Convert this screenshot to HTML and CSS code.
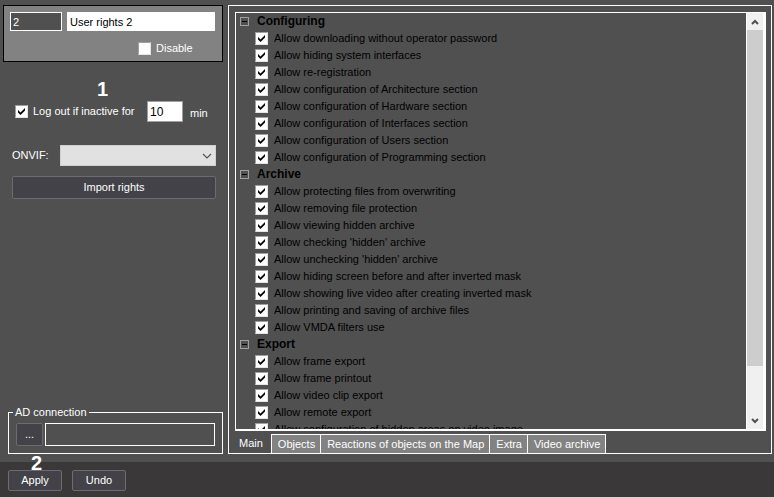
FILE: index.html
```html
<!DOCTYPE html>
<html lang="en">
<head>
    <meta charset="UTF-8">
    <meta name="viewport" content="width=device-width, initial-scale=1.0">
    <title>User rights</title>
    <link rel="stylesheet" href="styles.css">
</head>
<body>
<div class="content">
    <!-- Left column -->
    <div class="sidebar">
        <div class="object-box">
            <div class="object-row">
                <input type="text" class="object-id" value="2" aria-label="ID" readonly>
                <input type="text" class="object-name" value="User rights 2" aria-label="Name">
            </div>
            <label class="disable"><input type="checkbox" class="check">Disable</label>
        </div>

        <div class="logout-row">
            <span class="step step-logout">1</span>
            <input type="checkbox" class="check" id="logout" checked>
            <label for="logout" class="logout-label">Log out if inactive for</label>
            <input type="text" class="minutes" id="minutes" value="10">
            <label for="minutes" class="minutes-label">min</label>
        </div>

        <div class="onvif-row">
            <label for="onvif">ONVIF:</label>
            <div class="select-wrap">
                <select id="onvif"><option></option></select>
                <svg class="select-arrow" width="10" height="6" viewBox="0 0 10 6"><path d="M1 1l4 4 4-4" fill="none" stroke="#555" stroke-width="1.2"/></svg>
            </div>
        </div>
        <button class="btn btn-import">Import rights</button>

        <fieldset class="ad">
            <legend>AD connection</legend>
            <button class="btn btn-browse">...</button>
            <input type="text" class="ad-input" aria-label="AD connection">
        </fieldset>
    </div>

    <!-- Rights -->
    <div class="panel">
        <div class="list">
            <div class="tree">
                <h3><button class="expander" aria-label="Collapse Configuring"></button>Configuring</h3>
                <label><input type="checkbox" class="check" checked>Allow downloading without operator password</label>
                <label><input type="checkbox" class="check" checked>Allow hiding system interfaces</label>
                <label><input type="checkbox" class="check" checked>Allow re-registration</label>
                <label><input type="checkbox" class="check" checked>Allow configuration of Architecture section</label>
                <label><input type="checkbox" class="check" checked>Allow configuration of Hardware section</label>
                <label><input type="checkbox" class="check" checked>Allow configuration of Interfaces section</label>
                <label><input type="checkbox" class="check" checked>Allow configuration of Users section</label>
                <label><input type="checkbox" class="check" checked>Allow configuration of Programming section</label>
                <h3><button class="expander" aria-label="Collapse Archive"></button>Archive</h3>
                <label><input type="checkbox" class="check" checked>Allow protecting files from overwriting</label>
                <label><input type="checkbox" class="check" checked>Allow removing file protection</label>
                <label><input type="checkbox" class="check" checked>Allow viewing hidden archive</label>
                <label><input type="checkbox" class="check" checked>Allow checking 'hidden' archive</label>
                <label><input type="checkbox" class="check" checked>Allow unchecking 'hidden' archive</label>
                <label><input type="checkbox" class="check" checked>Allow hiding screen before and after inverted mask</label>
                <label><input type="checkbox" class="check" checked>Allow showing live video after creating inverted mask</label>
                <label><input type="checkbox" class="check" checked>Allow printing and saving of archive files</label>
                <label><input type="checkbox" class="check" checked>Allow VMDA filters use</label>
                <h3><button class="expander" aria-label="Collapse Export"></button>Export</h3>
                <label><input type="checkbox" class="check" checked>Allow frame export</label>
                <label><input type="checkbox" class="check" checked>Allow frame printout</label>
                <label><input type="checkbox" class="check" checked>Allow video clip export</label>
                <label><input type="checkbox" class="check" checked>Allow remote export</label>
                <label><input type="checkbox" class="check" checked>Allow configuration of hidden areas on video image</label>
            </div>
            <div class="scrollbar">
                <button class="scroll-btn" aria-label="Scroll up"><svg width="8" height="6" viewBox="0 0 8 6"><path d="M1 5l3-3 3 3" fill="none" stroke="#505050" stroke-width="2"/></svg></button>
                <div class="track"><div class="thumb"></div></div>
                <button class="scroll-btn" aria-label="Scroll down"><svg width="8" height="6" viewBox="0 0 8 6"><path d="M1 1l3 3 3-3" fill="none" stroke="#505050" stroke-width="2"/></svg></button>
            </div>
        </div>
        <div class="tabs">
            <button class="tab active">Main</button>
            <button class="tab">Objects</button>
            <button class="tab">Reactions of objects on the Map</button>
            <button class="tab">Extra</button>
            <button class="tab">Video archive</button>
        </div>
    </div>
</div>

<!-- Bottom buttons -->
<div class="footer">
    <span class="step step-apply">2</span>
    <button class="btn">Apply</button>
    <button class="btn">Undo</button>
</div>
</body>
</html>
```
FILE: styles.css
```css
* {
    box-sizing: border-box;
}
body {
    margin: 0;
    height: 100vh;
    display: flex;
    flex-direction: column;
    background-color: #505050;
    color: white;
    font-family: "Liberation Sans", Arial, sans-serif;
    font-size: 11px;
    line-height: 17px;
}
input, select, button {
    margin: 0;
    font: inherit;
    color: inherit;
    border-radius: 0;
}
.content {
    flex: 1;
    min-height: 0;
    display: flex;
    gap: 5px;
    padding: 5px 2px 8px 3px;
}

/* Left column */
.sidebar {
    width: 220px;
    display: flex;
    flex-direction: column;
}
.object-box {
    height: 57px;
    padding: 6px 7px 6px 6px;
    border: 1px solid black;
    background-color: #828282;
}
.object-row {
    display: flex;
    gap: 5px;
}
.object-row input {
    height: 19px;
    padding: 0 2px;
    border: 1px solid white;
}
.object-id {
    width: 52px;
    background-color: #505050;
}
.object-name {
    flex: 1;
    min-width: 0;
    background-color: white;
    color: black;
}
.disable {
    display: flex;
    align-items: center;
    gap: 5px;
    margin: 9px 0 0 128px;
}
.check {
    appearance: none;
    flex: none;
    position: relative;
    width: 13px;
    height: 13px;
    background-color: white;
    border: 1px solid #e4e4e4;
    border-top-color: #a0a0a0;
    border-left-color: #a0a0a0;
}
.check:checked::after {
    content: "";
    position: absolute;
    left: 2px;
    top: 2px;
    width: 7px;
    height: 7px;
    background-color: black;
    clip-path: polygon(0 29%, 36% 64%, 100% 0, 100% 36%, 36% 100%, 0 64%);
}
.logout-row {
    position: relative;
    display: flex;
    align-items: center;
    margin-top: 39px;
    padding-left: 12px;
}
.logout-label {
    width: 114px;
    margin-left: 5px;
}
.minutes {
    width: 36px;
    height: 21px;
    padding: 0 2px;
    border: 1px solid #a0a0a0;
    background-color: white;
    color: black;
    font-size: 12px;
}
.minutes-label {
    margin-left: 7px;
    padding-top: 4px;
}
.step {
    position: absolute;
    font-size: 20px;
    font-weight: bold;
    line-height: 20px;
}
.step-logout {
    left: 94px;
    top: -22px;
}
.onvif-row {
    display: flex;
    align-items: center;
    justify-content: space-between;
    margin: 23px 7px 0 9px;
}
.select-wrap {
    position: relative;
    width: 156px;
    height: 21px;
}
.select-wrap select {
    appearance: none;
    display: block;
    width: 100%;
    height: 100%;
    border: 1px solid #d0d0d0;
    background-color: #e1e1e1;
    color: black;
}
.select-arrow {
    position: absolute;
    right: 4px;
    top: 8px;
    pointer-events: none;
}
.btn {
    width: 54px;
    height: 21px;
    padding: 0;
    border: 1px solid #6c6c70;
    border-radius: 2px;
    background-color: #434248;
    color: white;
}
.btn-import {
    width: auto;
    height: 23px;
    margin: 10px 7px 0 9px;
}
.ad {
    display: flex;
    gap: 2px;
    min-width: 0;
    margin: auto 0 0 5px;
    padding: 2px 7px 7px;
    border: 1px solid white;
}
.ad legend {
    padding: 0 2px;
    margin-left: -3px;
}
.btn-browse {
    width: 27px;
    height: 23px;
}
.ad-input {
    flex: 1;
    min-width: 0;
    height: 23px;
    border: 1px solid white;
    background-color: #505050;
}

/* Rights */
.panel {
    flex: 1;
    min-width: 0;
    display: flex;
    flex-direction: column;
    border: 1px solid white;
}
.list {
    flex: 1;
    min-height: 0;
    display: flex;
    margin: 6px 5px 3px 6px;
    border: 1px solid white;
    border-right-width: 3px;
    border-bottom-width: 2px;
}
.tree {
    flex: 1;
    min-width: 0;
    overflow: hidden;
    color: black;
}
.tree h3, .tree label {
    display: flex;
    align-items: center;
    height: 17px;
    margin: 0;
    white-space: nowrap;
}
.tree h3 {
    gap: 8px;
    padding-left: 4px;
    font-size: 12px;
}
.tree label {
    gap: 6px;
    padding-left: 19px;
}
.expander {
    position: relative;
    width: 9px;
    height: 9px;
    padding: 0;
    border: 1px solid #a0a0a0;
    background: none;
}
.expander::after {
    content: "";
    position: absolute;
    left: 1px;
    top: 3px;
    width: 5px;
    height: 1px;
    background-color: black;
}
.scrollbar {
    width: 17px;
    display: flex;
    flex-direction: column;
    border-left: 1px solid white;
    background-color: #f0f0f0;
}
.scroll-btn {
    height: 17px;
    padding: 0;
    border: none;
    background: none;
    display: flex;
    align-items: center;
    justify-content: center;
}
.track {
    flex: 1;
}
.thumb {
    height: 88%;
    background-color: #cdcdcd;
}
.tabs {
    display: flex;
}
.tab {
    height: 19px;
    padding: 0 5px 0 6px;
    border: 1px solid white;
    border-left: none;
    border-bottom: none;
    background-color: #828282;
}
.tab.active {
    padding: 0 8px 0 10px;
    border-top: none;
    background: none;
}

/* Bottom buttons */
.footer {
    position: relative;
    display: flex;
    gap: 10px;
    padding: 8px 8px 6px;
    background-color: #3a3838;
}
.step-apply {
    left: 31px;
    top: -9px;
}
```
